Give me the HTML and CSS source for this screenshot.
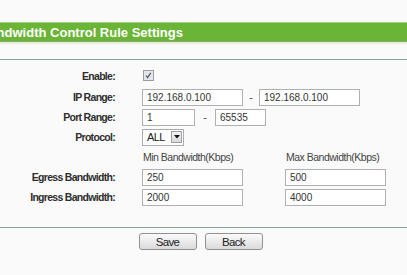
FILE: index.html
```html
<!DOCTYPE html>
<html>
<head>
<meta charset="utf-8">
<link rel="stylesheet" href="styles.css">
</head>
<body>
<div class="page">
  <div class="titlebar"><span class="title">Bandwidth Control Rule Settings</span></div>
  <div class="divider"></div>
  <div class="form">
    <div class="lbl row-first">Enable:</div>
    <div class="val row-first">
      <span class="check"><svg width="11" height="11" viewBox="0 0 11 11"><rect x="0.5" y="0.5" width="10" height="10" fill="#e4e6ea" stroke="#9a9ca0"/><polyline points="3,5.5 4.6,7.6 7.8,2.8" fill="none" stroke="#4d5a78" stroke-width="1.2"/></svg></span>
    </div>

    <div class="lbl">IP Range:</div>
    <div class="val">
      <input class="inp w-ip" type="text" value="192.168.0.100">
      <span class="dash">-</span>
      <input class="inp w-ip" type="text" value="192.168.0.100">
    </div>

    <div class="lbl">Port Range:</div>
    <div class="val">
      <input class="inp w-port" type="text" value="1">
      <span class="dash dash-port">-</span>
      <input class="inp w-port2" type="text" value="65535">
    </div>

    <div class="lbl">Protocol:</div>
    <div class="val">
      <span class="select"><span class="select-text">ALL</span><span class="select-btn"><svg width="6" height="4" viewBox="0 0 6 4"><polygon points="0,0 6,0 3,3.5" fill="#111"/></svg></span></span>
    </div>

    <div class="lbl"></div>
    <div class="val bw">
      <span class="bw-head">Min Bandwidth(Kbps)</span>
      <span class="bw-head">Max Bandwidth(Kbps)</span>
    </div>

    <div class="lbl">Egress Bandwidth:</div>
    <div class="val bw">
      <input class="inp w-bw" type="text" value="250">
      <input class="inp w-bw" type="text" value="500">
    </div>

    <div class="lbl">Ingress Bandwidth:</div>
    <div class="val bw">
      <input class="inp w-bw" type="text" value="2000">
      <input class="inp w-bw" type="text" value="4000">
    </div>
  </div>
  <div class="divider divider-bottom"></div>
  <div class="actions">
    <button class="btn" type="button">Save</button>
    <button class="btn" type="button">Back</button>
  </div>
</div>
</body>
</html>
```

FILE: styles.css
```css
html, body {
  margin: 0;
  padding: 0;
}
body {
  background: #fafafa;
  font-family: "Liberation Sans", Arial, sans-serif;
  color: #333;
  overflow: hidden;
}
.page {
  padding-top: 22px;
}
.titlebar {
  height: 18px;
  background: #6bb536;
  border-top: 1px solid #a2d37f;
  border-bottom: 1px solid #86a574;
  box-shadow: 0 2px 0 #e3f1d9;
  display: flex;
  align-items: center;
  overflow: hidden;
}
.title {
  color: #fff;
  font-weight: bold;
  font-size: 13px;
  white-space: nowrap;
  margin-left: -20px;
}
.divider {
  height: 1px;
  background: #86a696;
  margin-top: 17px;
}
.divider-bottom {
  margin-top: 20px;
}
.form {
  display: grid;
  grid-template-columns: 115px auto;
  column-gap: 27px;
  grid-template-rows: 23px repeat(6, 20px);
  margin-top: 4px;
}
.lbl {
  font-weight: bold;
  font-size: 10.5px;
  letter-spacing: -0.7px;
  color: #2e2e2e;
  text-align: right;
  align-self: center;
  white-space: nowrap;
}
.val {
  display: flex;
  align-items: center;
}
.check {
  display: flex;
  margin-left: 1px;
}
.inp {
  box-sizing: border-box;
  height: 17px;
  margin: 0;
  padding: 0 4px;
  border: 1px solid #aeb0b3;
  background: #fff;
  font-family: "Liberation Sans", Arial, sans-serif;
  font-size: 10px;
  color: #333;
  outline: none;
}
.w-ip { width: 101px; }
.w-port { width: 53px; }
.w-port2 { width: 51px; }
.w-bw { width: 101px; }
.dash {
  width: 16px;
  text-align: center;
  font-size: 11px;
  color: #444;
}
.dash-port {
  width: 20px;
}
.select {
  box-sizing: border-box;
  width: 42px;
  height: 17px;
  border: 1px solid #a9abae;
  background: #fff;
  display: flex;
  align-items: center;
  justify-content: space-between;
  padding: 0 1px 0 4px;
}
.select-text {
  font-size: 11px;
  letter-spacing: -0.6px;
  color: #222;
}
.select-btn {
  box-sizing: border-box;
  width: 11px;
  height: 12px;
  border: 1px solid #9d9fa3;
  background: linear-gradient(#f4f4f4, #d9d9d9);
  display: flex;
  align-items: center;
  justify-content: center;
}
.bw {
  display: grid;
  grid-template-columns: 101px 101px;
  column-gap: 42px;
}
.bw-head {
  font-size: 10.5px;
  letter-spacing: -0.5px;
  color: #444;
  white-space: nowrap;
  margin-left: 1px;
}
.actions {
  display: flex;
  justify-content: center;
  gap: 8px;
  padding-right: 6px;
  margin-top: 5px;
}
.btn {
  box-sizing: border-box;
  width: 58px;
  height: 17px;
  padding: 0;
  border: 1px solid #8f9193;
  border-radius: 3px;
  background: linear-gradient(#fbfbfb, #dadada);
  font-family: "Liberation Sans", Arial, sans-serif;
  font-size: 11.5px;
  letter-spacing: -0.7px;
  color: #222;
}
```
